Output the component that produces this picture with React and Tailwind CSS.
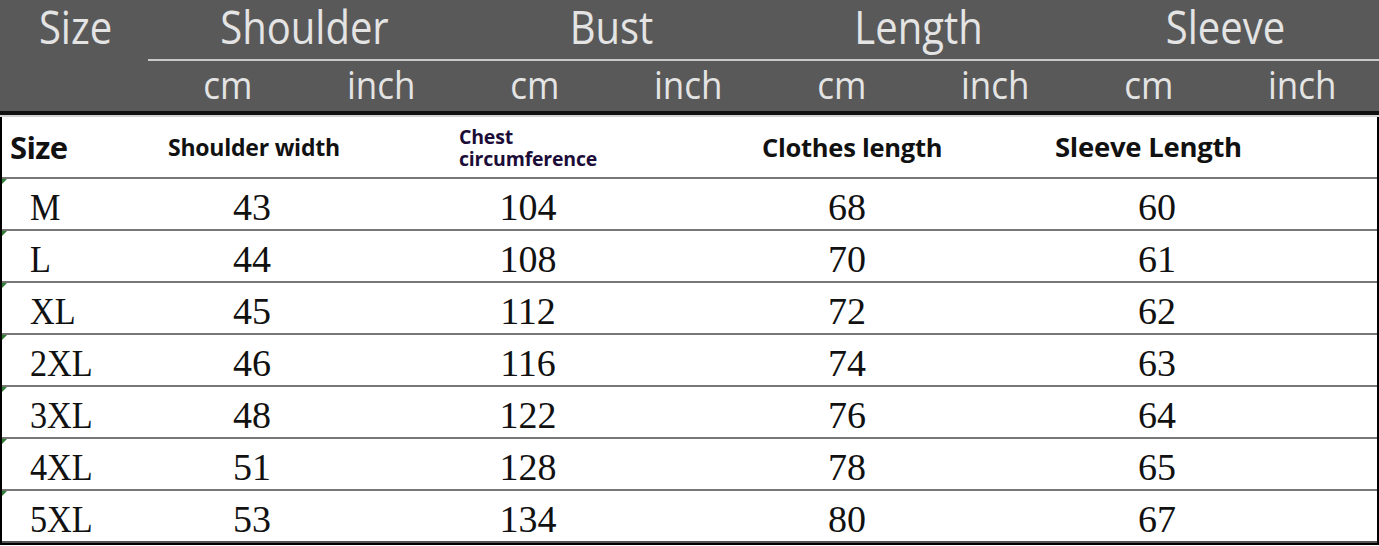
const GROUPS = ['Shoulder', 'Bust', 'Length', 'Sleeve']

const ROWS = [
  ['M', '43', '104', '68', '60'],
  ['L', '44', '108', '70', '61'],
  ['XL', '45', '112', '72', '62'],
  ['2XL', '46', '116', '74', '63'],
  ['3XL', '48', '122', '76', '64'],
  ['4XL', '51', '128', '78', '65'],
  ['5XL', '53', '134', '80', '67'],
]

const COLS = 'grid grid-cols-[150px_200px_352px_286px_334px_1fr]'

function App() {
  return (
    <div className="h-[546px] w-[1379px] overflow-hidden bg-white font-['Open_Sans',sans-serif]">
      {/* dark banner */}
      <div className="grid h-[111px] grid-cols-[151px_repeat(4,1fr)] grid-rows-[59px_2px_50px] bg-[#595959] text-[#e4e4e4]">
        <div className="flex items-end justify-center pb-[9px] text-[40px] leading-none">
          <span className="origin-bottom scale-y-[1.12]">Size</span>
        </div>
        {GROUPS.map((g) => (
          <div key={g} className="flex items-end justify-center pb-[9px] text-[40px] leading-none">
            <span className="origin-bottom scale-y-[1.12]">{g}</span>
          </div>
        ))}
        <div />
        <div className="col-span-4 -ml-[3px] bg-[#c9c9c9]" />
        <div />
        {GROUPS.map((g) => (
          <div key={g} className="grid grid-cols-2 text-center text-[35px] leading-[48px]">
            <span className="scale-y-[1.08]">cm</span>
            <span className="scale-y-[1.08]">inch</span>
          </div>
        ))}
      </div>
      <div className="h-[4px] bg-[#111]" />
      <div className="h-[2px] bg-[#d4d4d4]" />

      {/* table */}
      <div className="border-x-2 border-black">
        <div className={`${COLS} h-[62px] items-center border-b-2 border-[#777] font-bold text-[#111]`}>
          <div className="pl-2 text-[31px] tracking-[-0.02em]">Size</div>
          <div className="pl-[16px] text-[23px] tracking-[-0.01em]">Shoulder width</div>
          <div className="pl-[107px] pt-[2px] text-[19.5px] leading-[22px] tracking-[-0.01em] text-[#1c0d38]">
            Chest
            <br />
            circumference
          </div>
          <div className="pl-[58px] text-[25.5px] tracking-[-0.01em]">Clothes length</div>
          <div className="pl-[65px] text-[27.5px] tracking-[-0.01em]">Sleeve Length</div>
          <div />
        </div>
        {ROWS.map((r, i) => (
          <div
            key={r[0]}
            className={`relative ${COLS} h-[52px] items-center border-b-2 pt-[6px] font-['Liberation_Serif',serif] text-[38px] leading-none text-[#111] ${
              i === ROWS.length - 1 ? 'border-[#555]' : 'border-[#777]'
            }`}
          >
            <span className="absolute top-0 left-0 h-0 w-0 border-t-[5px] border-r-[5px] border-t-[#2f7d32] border-r-transparent" />
            <div className="pl-[28px]">
              <span className="inline-block origin-left scale-x-[0.9]">{r[0]}</span>
            </div>
            <div className="text-center">{r[1]}</div>
            <div className="text-center">{r[2]}</div>
            <div className="text-center">{r[3]}</div>
            <div className="text-center">{r[4]}</div>
            <div />
          </div>
        ))}
        <div className="h-[2px] bg-black" />
      </div>
    </div>
  )
}

export default App
